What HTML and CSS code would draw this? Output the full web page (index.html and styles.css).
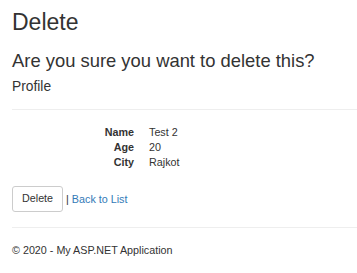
FILE: index.html
```html
<!DOCTYPE html>
<html lang="en">
<head>
    <meta charset="UTF-8">
    <meta name="viewport" content="width=device-width, initial-scale=1.0">
    <title>Delete - My ASP.NET Application</title>
    <link rel="stylesheet" href="styles.css">
</head>
<body>
    <div class="container body-content">
        <h2>Delete</h2>

        <h3>Are you sure you want to delete this?</h3>
        <div>
            <h4>Profile</h4>
            <hr>
            <dl class="dl-horizontal">
                <dt>Name</dt>
                <dd>Test 2</dd>
                <dt>Age</dt>
                <dd>20</dd>
                <dt>City</dt>
                <dd>Rajkot</dd>
            </dl>

            <form class="form-actions">
                <input type="submit" value="Delete" class="btn btn-default"> |
                <a href="#">Back to List</a>
            </form>
        </div>
        <hr>
        <footer>
            <p>&copy; 2020 - My ASP.NET Application</p>
        </footer>
    </div>
</body>
</html>
```

FILE: styles.css
```css
body {
    margin: 0;
    font-family: "Liberation Sans", Arial, Helvetica, sans-serif;
    font-size: 10.75px;
    line-height: 1.42857;
    color: #333;
    background-color: #fff;
}
.container {
    padding: 0 0 0 12px;
}
h2, h3, h4 {
    font-weight: 500;
    line-height: 1.1;
}
h2 {
    font-size: 23px;
    margin: 10px 0 7.5px;
}
h3 {
    font-size: 18.4px;
    margin: 16px 0 7px;
}
h4 {
    font-size: 13.8px;
    margin: 6px 0 7.5px;
}
hr {
    margin: 15px 0;
    border: 0;
    border-top: 1px solid #eee;
}
.dl-horizontal {
    display: grid;
    grid-template-columns: 122px 1fr;
    column-gap: 15px;
    margin: 0 0 15px;
}
.dl-horizontal dt {
    font-weight: bold;
    text-align: right;
}
.dl-horizontal dd {
    margin: 0;
}
.form-actions {
    margin: 0;
}
.btn {
    display: inline-block;
    padding: 4.5px 9px;
    font-family: inherit;
    font-size: 10.75px;
    line-height: 1.42857;
    border: 1px solid #ccc;
    border-radius: 3px;
    cursor: pointer;
}
.btn-default {
    color: #333;
    background-color: #fff;
}
a {
    color: #337ab7;
    text-decoration: none;
}
footer p {
    margin: 0 0 7.5px;
}
```
